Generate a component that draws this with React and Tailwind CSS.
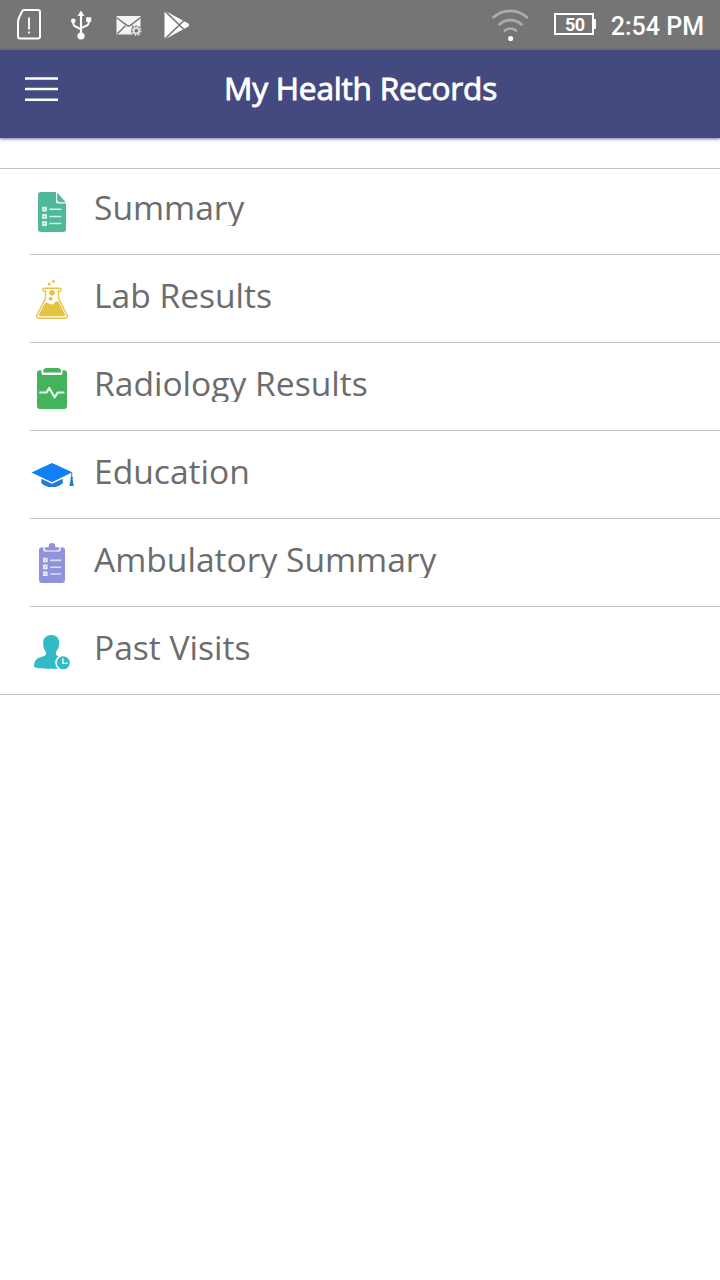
import React from "react";

const SimAlertIcon = () => (
  <svg width="26" height="32" viewBox="0 0 26 32" fill="none">
    <path
      d="M8.200 2H22a2 2 0 0 1 2 2v24.500a2 2 0 0 1-2 2H4a2 2 0 0 1-2-2V14.500a12 12 0 0 1 .9-4.300L6 3.400A2.400 2.400 0 0 1 8.200 2Z"
      stroke="white"
      strokeWidth="2"
    />
    <path d="M13 9.500v12M13 23.600v2" stroke="white" strokeWidth="1.800" />
  </svg>
);

const UsbIcon = () => (
  <svg width="22" height="32" viewBox="0 0 22 32" fill="none">
    <path d="M11 1.5l3.4 5.4H7.6Z" fill="white" />
    <path d="M11 5v22" stroke="white" strokeWidth="2.2" />
    <path
      d="M3.3 11v3.6c0 1.6.8 2.3 2.2 2.9L11 20.3M18.7 10.5v3.3c0 1.4-.7 2.2-2 2.8L11 19.2"
      stroke="white"
      strokeWidth="2"
    />
    <circle cx="3.3" cy="11.8" r="2.3" fill="white" />
    <rect x="16.2" y="8.3" width="5" height="4.6" fill="white" />
    <circle cx="11" cy="27" r="3.6" fill="white" />
  </svg>
);

const MailGearIcon = () => (
  <svg width="27" height="22" viewBox="0 0 27 22" fill="none">
    <rect x="0.5" y="1" width="24" height="18.500" fill="#f4f4f4" />
    <path
      d="M.5 2.500l10.100 7.600a3.300 3.300 0 0 0 4.200 0l9.700-7.600M1.200 19l8.200-8.200M16.400 10.800l3 3"
      stroke="#757575"
      strokeWidth="1.4"
    />
    <circle cx="20.300" cy="15.800" r="5.400" fill="#757575" />
    <circle cx="20.300" cy="15.800" r="2.800" stroke="#dedede" strokeWidth="2" />
    <circle
      cx="20.300"
      cy="15.800"
      r="4.300"
      stroke="#dedede"
      strokeWidth="1.700"
      strokeDasharray="1.700 1.677"
    />
  </svg>
);

const PlayStoreIcon = () => (
  <svg width="28" height="30" viewBox="0 0 28 30" fill="none">
    <path
      d="M.5 1.500l2 .1 11.300 6.200 9.200 4.900c2.800 1 2.800 3.600 0 4.600l-9.200 5L2.500 28.500l-2 .1Z"
      fill="white"
    />
    <path d="M.5 .6l20.800 20.100M.5 29.400L21.300 9.300" stroke="#757575" strokeWidth="1.5" />
  </svg>
);

const WifiIcon = () => (
  <svg width="40" height="34" viewBox="0 0 40 34" fill="none" strokeLinecap="round">
    <g stroke="#acacac" strokeWidth="2.7">
      <path d="M3.500 9.300a25 25 0 0 1 33.500 0" />
      <path d="M9.500 16.400a16.500 16.500 0 0 1 22 0" />
      <path d="M15 22.600a8 8 0 0 1 10.800 0" />
    </g>
    <circle cx="20.600" cy="30.500" r="2.600" fill="white" />
  </svg>
);

const MenuIcon = () => (
  <svg width="33" height="26" viewBox="0 0 33 26">
    <path d="M0 1.500h33M0 12h33M0 22.700h33" stroke="white" strokeWidth="2.500" />
  </svg>
);

const SummaryIcon = () => (
  <svg width="44" height="44" viewBox="10 10 44 44" fill="none">
    <path
      d="M21 12h15v9a2.5 2.5 0 0 0 2.5 2.5H46V49a3 3 0 0 1-3 3H21a3 3 0 0 1-3-3V15a3 3 0 0 1 3-3Z"
      fill="#4fb99a"
    />
    <path d="M37.2 12.400l8.600 9.800h-6.500a2.100 2.100 0 0 1-2.100-2.100Z" fill="#4fb99a" />
    <path
      d="M23 27.7h3v3h-3ZM23 34.9h3v3h-3ZM23 42.1h3v3h-3Z"
      stroke="#e6f7f1"
      strokeWidth="1.7"
    />
    <path d="M29.3 29.200h12M29.300 36.500h12M29.300 43.600h12" stroke="#d3f0e6" strokeWidth="1.500" />
  </svg>
);

const LabIcon = () => (
  <svg width="44" height="44" viewBox="10 8 44 44" fill="none">
    <g fill="#e5c445">
      <circle cx="29.3" cy="14.2" r="1.4" />
      <circle cx="33.5" cy="11.6" r="1.5" />
      <circle cx="32" cy="22.7" r="2.8" />
      <circle cx="30.6" cy="28.8" r="2" />
      <path d="M24.7 33.3c2.3-1.6 4.3.4 6.3 1.2 2.5.5 4-3.2 6.4-3.2.8 0 1.2.6 1.6 1.2l6 12.1c.4.9-.1 1.600-1 1.600H20c-1 0-1.500-.8-1-1.600Z" />
    </g>
    <path
      d="M23.9 18.2h16.2a.9.9 0 0 1 .9.9v1.100a.9.9 0 0 1-.9.9h-1.600v7.300l8.400 16.300c1.100 2-.1 3.600-2 3.600H19.100c-1.900 0-3.100-1.600-2-3.600l8.400-16.300v-7.300h-1.600a.9.9 0 0 1-.9-.9v-1.100a.9.9 0 0 1 .9-.9Z"
      stroke="#e5c445"
      strokeWidth="1.4"
    />
  </svg>
);

const RadiologyIcon = () => (
  <svg width="44" height="44" viewBox="10 10 44 44" fill="none">
    <path
      d="M17 17.300a3 3 0 0 1 3-3h1.500v2.700a2 2 0 0 0 2 2h17a2 2 0 0 0 2-2v-2.700H44a3 3 0 0 1 3 3V50a3 3 0 0 1-3 3H20a3 3 0 0 1-3-3Z"
      fill="#44b45c"
    />
    <path d="M23.200 16.500v-.8A3.600 3.600 0 0 1 26.800 12h10.600a3.600 3.600 0 0 1 3.600 3.700v.8Z" fill="#44b45c" />
    <path
      d="M19.300 36.500h7.200l2.800-4.600 5.400 9.500 3-4.900h6.700"
      stroke="#e8f8ec"
      strokeWidth="2.100"
      strokeLinejoin="round"
    />
  </svg>
);

const EducationIcon = () => (
  <svg width="44" height="44" viewBox="10 10 44 44">
    <path d="M32 18.900l20.400 9.300L32 38.300 11.400 28.600Z" fill="#1180f5" />
    <path
      d="M21.300 34.700L32 39.800l10.800-5.100v4.200c-2 2.500-6 4.200-10.800 4.200s-8.700-1.700-10.700-4.200Z"
      fill="#247bd3"
    />
    <path
      d="M51.200 28.600h1v4.200a1.500 1.500 0 0 1 .4 2.300l1.100 6.900h-4.300l1.300-6.900a1.500 1.500 0 0 1 .5-2.300Z"
      fill="#247bd3"
    />
  </svg>
);

const AmbulatoryIcon = () => (
  <svg width="44" height="44" viewBox="10 10 44 44" fill="none">
    <path
      d="M22 15.200h1.200v1.200a3.200 3.200 0 0 0 3.200 3.200h11.200a3.200 3.200 0 0 0 3.200-3.200v-1.200H42a3 3 0 0 1 3 3V48a3 3 0 0 1-3 3H22a3 3 0 0 1-3-3V18.200a3 3 0 0 1 3-3Z"
      fill="#9092dc"
    />
    <path
      d="M24.600 15.200h4.100v-.8a3.300 3.300 0 0 1 6.600 0v.8h4.100v1.200a2 2 0 0 1-2 2H26.600a2 2 0 0 1-2-2Z"
      fill="#9092dc"
    />
    <path
      d="M23.800 26.600h2.900v2.900h-2.900ZM23.800 33.400h2.900v2.900h-2.900ZM23.800 40.300h2.900v2.900h-2.900Z"
      stroke="#ececfa"
      strokeWidth="1.700"
    />
    <path d="M30.200 28.400h11M30.200 35.200h11M30.200 42h11" stroke="#dcdcf5" strokeWidth="1.600" />
  </svg>
);

const VisitsIcon = () => (
  <svg width="44" height="44" viewBox="10 10 44 44" fill="none">
    <path
      d="M31.400 15c4.800 0 7.700 3 7.700 7.400 0 2.200-.3 4.800-1.500 7-.7 1.200-1.400 2-1.600 3v2c.2 1.400 5 2.300 7.300 3.700 3.200 1.700 4 4.800 4 8.300 0 1.400-6 2.300-15.900 2.300S14 47.700 14 46.400c0-3.800 1.200-6.700 4.200-8.300 2.400-1.400 7-2.200 7.800-3.700v-2c-.2-1-1-1.800-1.600-3-.9-2.200-1.200-4.800-1.200-7C23.200 18 26.600 15 31.400 15Z"
      fill="#30bbc6"
    />
    <circle cx="43.300" cy="42.800" r="7.300" fill="#30bbc6" stroke="white" strokeWidth="1.500" />
    <path d="M42.900 38.200v5.200h4.700" stroke="white" strokeWidth="1.300" />
  </svg>
);

const records = [
  { label: "Summary", icon: <SummaryIcon /> },
  { label: "Lab Results", icon: <LabIcon /> },
  { label: "Radiology Results", icon: <RadiologyIcon /> },
  { label: "Education", icon: <EducationIcon /> },
  { label: "Ambulatory Summary", icon: <AmbulatoryIcon /> },
  { label: "Past Visits", icon: <VisitsIcon /> },
];

const StatusBar = () => (
  <div className="flex h-[50px] items-start bg-[#757575] pl-4 pr-4 font-['Roboto',sans-serif] text-white">
    <div className="mt-2">
      <SimAlertIcon />
    </div>
    <div className="ml-[28px] mt-[9px]">
      <UsbIcon />
    </div>
    <div className="ml-6 mt-[15px]">
      <MailGearIcon />
    </div>
    <div className="ml-[21px] mt-[10px]">
      <PlayStoreIcon />
    </div>
    <div className="ml-auto mt-2">
      <WifiIcon />
    </div>
    <div className="ml-6 mt-[13px] flex items-center">
      <div className="flex h-[22px] w-10 items-center justify-center border-2 border-white pl-0.5 pt-0.5 text-[18px] font-bold leading-none tracking-[-0.6px]">
        50
      </div>
      <div className="h-2.5 w-0.5 bg-white" />
    </div>
    <div className="ml-[15px] mt-[11px] text-[25px] font-medium leading-8">2:54 PM</div>
  </div>
);

const Header = () => (
  <header className="flex h-[88px] items-start bg-[#444a7f] px-[25px] shadow-[0_1px_3px_rgba(50,50,110,0.7)]">
    <button className="mt-[27px]">
      <MenuIcon />
    </button>
    <h1 className="mr-[32px] mt-[17px] flex-1 text-center text-[31.6px] font-normal leading-[42px] tracking-[-0.2px] text-white [-webkit-text-stroke:0.9px_white]">
      My Health Records
    </h1>
  </header>
);

const App = () => {
  return (
    <div className="min-h-screen bg-white font-['Open_Sans',sans-serif]">
      <StatusBar />
      <Header />
      <ul className="mt-[30px] border-y border-[#c4c4c4]">
        {records.map(({ label, icon }) => (
          <li
            key={label}
            className="ml-[30px] flex h-[88px] items-end border-b border-[#c4c4c4] first:h-[86px] last:h-[87px] last:border-b-0"
          >
            <div className="mb-5 h-11 w-11">{icon}</div>
            <div className="mb-7 ml-5 h-[38px] overflow-hidden whitespace-nowrap pr-1 text-[33.6px] leading-[38px] text-[#6c6c6c]">
              {label}
            </div>
          </li>
        ))}
      </ul>
    </div>
  );
};

export default App;
